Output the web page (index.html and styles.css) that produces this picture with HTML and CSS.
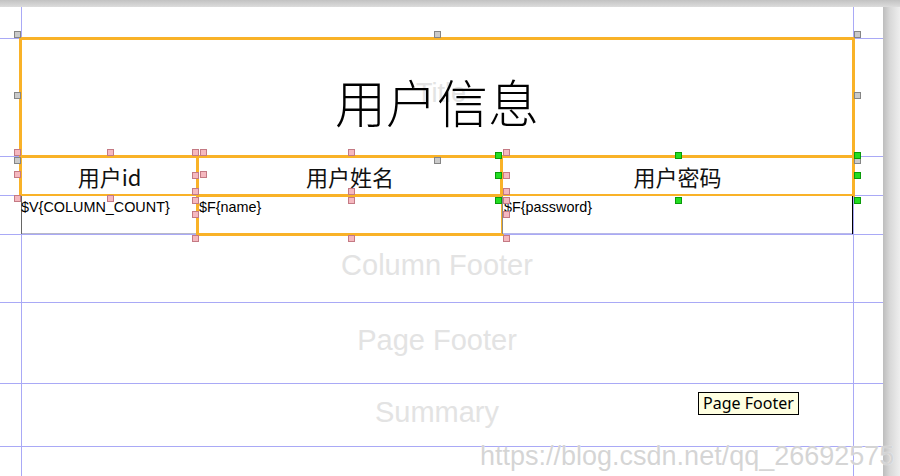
FILE: index.html
```html
<!DOCTYPE html>
<html lang="zh">
<head>
  <meta charset="UTF-8" />
  <meta name="viewport" content="width=device-width, initial-scale=1.0"/>
  <title>用户信息 - 报表设计</title>
  <link rel="stylesheet" href="styles.css">
</head>
<body>

  <div class="workspace">
    <div class="topbar"></div>

    <div class="stage">
      <div class="canvas">
        <div class="band band-margin"></div>

        <div class="band band-title">
          <div class="title-field selected">
            <span class="band-label">Title</span>
            <span class="title-text">用户信息</span>
          </div>
        </div>

        <div class="band band-header">
          <div class="row">
            <div class="cell col-id head selected">用户id</div>
            <div class="cell col-name head selected">用户姓名</div>
            <div class="cell col-pass head selected">用户密码</div>
          </div>
        </div>

        <div class="band band-detail">
          <div class="row">
            <div class="cell col-id detail">$V{COLUMN_COUNT}</div>
            <div class="cell col-name detail selected">$F{name}</div>
            <div class="cell col-pass detail">$F{password}</div>
          </div>
        </div>

        <div class="band band-footer">
          <span class="band-label">Column Footer</span>
        </div>
        <div class="band band-page">
          <span class="band-label">Page Footer</span>
        </div>
        <div class="band band-summary">
          <span class="band-label">Summary</span>
        </div>

        <!-- hover tip -->
        <div class="tooltip">Page Footer</div>
        <div class="watermark">https://blog.csdn.net/qq_26692575</div>
      </div>
      <div class="shadow"></div>
    </div>

    <!-- selection handles -->
    <svg class="handles" width="900" height="476" viewBox="0 0 900 476">
      <g class="h-gray">
        <rect x="14.5" y="31.5" width="6" height="6"/>
        <rect x="434.5" y="31.5" width="6" height="6"/>
        <rect x="854.5" y="31.5" width="6" height="6"/>
        <rect x="14.5" y="92.5" width="6" height="6"/>
        <rect x="854.5" y="92.5" width="6" height="6"/>
        <rect x="14.5" y="157.5" width="6" height="6"/>
        <rect x="434.5" y="157.5" width="6" height="6"/>
        <rect x="854.5" y="157.5" width="6" height="6"/>
      </g>
      <g class="h-pink">
        <rect x="14.5" y="149.5" width="6" height="6"/>
        <rect x="107.5" y="149.5" width="6" height="6"/>
        <rect x="192.5" y="149.5" width="6" height="6"/>
        <rect x="200.5" y="149.5" width="6" height="6"/>
        <rect x="348.5" y="149.5" width="6" height="6"/>
        <rect x="503.5" y="149.5" width="6" height="6"/>
        <rect x="14.5" y="171.5" width="6" height="6"/>
        <rect x="192.5" y="172.5" width="6" height="6"/>
        <rect x="200.5" y="171.5" width="6" height="6"/>
        <rect x="503.5" y="172.5" width="6" height="6"/>
        <rect x="192.5" y="188.5" width="6" height="6"/>
        <rect x="348.5" y="188.5" width="6" height="6"/>
        <rect x="503.5" y="188.5" width="6" height="6"/>
        <rect x="14.5" y="195.5" width="6" height="6"/>
        <rect x="107.5" y="195.5" width="6" height="6"/>
        <rect x="192.5" y="197.5" width="6" height="6"/>
        <rect x="348.5" y="197.5" width="6" height="6"/>
        <rect x="503.5" y="197.5" width="6" height="6"/>
        <rect x="192.5" y="211.5" width="6" height="6"/>
        <rect x="503.5" y="211.5" width="6" height="6"/>
        <rect x="192.5" y="235.5" width="6" height="6"/>
        <rect x="348.5" y="235.5" width="6" height="6"/>
        <rect x="503.5" y="235.5" width="6" height="6"/>
      </g>
      <g class="h-green">
        <rect x="495.5" y="152.5" width="6" height="6"/>
        <rect x="675.5" y="152.5" width="6" height="6"/>
        <rect x="854.5" y="152.5" width="6" height="6"/>
        <rect x="495.5" y="172.5" width="6" height="6"/>
        <rect x="854.5" y="172.5" width="6" height="6"/>
        <rect x="495.5" y="197.5" width="6" height="6"/>
        <rect x="675.5" y="197.5" width="6" height="6"/>
        <rect x="854.5" y="197.5" width="6" height="6"/>
      </g>
    </svg>
  </div>

</body>
</html>
```

FILE: styles.css
```css
body {
  margin: 0;
  font-family: "Liberation Sans", Arial, sans-serif;
  background: #ececec;
}

.workspace {
  position: relative;
  width: 900px;
  height: 476px;
  display: flex;
  flex-direction: column;
  overflow: hidden;
}

.topbar {
  height: 7px;
  background: linear-gradient(#c2c2c2, #dcdcdc);
}

.stage {
  flex: 1;
  display: flex;
}

/* page with the two vertical margin guides */
.canvas {
  position: relative;
  width: 883px;
  background:
    linear-gradient(#a9a9f6, #a9a9f6) 21px 0 / 1px 100% no-repeat,
    linear-gradient(#a9a9f6, #a9a9f6) 853px 0 / 1px 100% no-repeat,
    #fff;
}

.shadow {
  flex: 1;
  background: linear-gradient(to right, #bdbdbd, #d8d8d8 40%, #eeeeee);
}

.band {
  display: flex;
  padding-left: 21px;
  border-bottom: 1px solid #a9a9f6;
}

.band-margin { height: 31px; }
.band-title { height: 117px; }
.band-header { height: 38px; }
.band-detail { height: 38px; }
.band-footer { height: 67px; }
.band-page { height: 80px; }
.band-summary { height: 62px; }

.band-label {
  width: 832px;
  display: flex;
  align-items: center;
  justify-content: center;
  padding-bottom: 6px;
  font-size: 29px;
  color: #e3e3e3;
}

.selected {
  outline: 3px solid #f9b228;
  outline-offset: -1px;
}

.title-field {
  width: 832px;
  display: grid;
  place-items: center;
}

.title-field > span {
  grid-area: 1 / 1;
}

.title-field .band-label {
  padding: 0 0 8px 4px;
  font-size: 27px;
}

.title-text {
  margin-top: 6px;
  margin-right: 4px;
  font-family: "Noto Sans CJK SC", sans-serif;
  font-weight: 300;
  font-size: 51px;
  color: #000;
}

.row {
  display: flex;
  width: 832px;
}

.cell {
  box-sizing: border-box;
  background: #fff;
}

.col-id { width: 177px; }
.col-name { width: 304px; }
.col-pass { width: 351px; }

.head {
  display: flex;
  align-items: center;
  justify-content: center;
  padding-bottom: 1px;
  font-family: "Noto Sans CJK SC", sans-serif;
  font-size: 22px;
  color: #111;
}

.head.col-pass {
  box-shadow: inset -1px -1px 0 #7a7a7a;
}

.detail {
  padding: 3px 0 0 0;
  font-size: 14.4px;
  color: #000;
}

.detail.col-id {
  box-shadow: inset 1px 0 0 #666, inset 0 -1px 0 #b8b8c8;
}

.detail.col-name {
  padding-left: 1px;
}

.detail.col-pass {
  padding-left: 2px;
  box-shadow: inset 1px 0 0 #8a8a8a, inset -1px 0 0 #000, inset 0 -1px 0 #b8b8e8;
}

.tooltip {
  position: absolute;
  left: 698px;
  top: 385px;
  box-sizing: border-box;
  width: 101px;
  height: 23px;
  border: 1px solid #000;
  background: #ffffe1;
  font-family: "Noto Sans", sans-serif;
  font-size: 16px;
  line-height: 20px;
  text-align: center;
  color: #000;
}

.watermark {
  position: absolute;
  left: 480px;
  top: 434px;
  font-size: 27px;
  line-height: 30px;
  white-space: nowrap;
  color: rgba(200, 200, 200, 0.75);
  text-shadow: 0 0 1px #fff;
}

.handles {
  position: absolute;
  left: 0;
  top: 0;
  pointer-events: none;
}

.h-gray rect { fill: #cacaca; stroke: #858585; }
.h-pink rect { fill: #f5b8bf; stroke: #c47a84; }
.h-green rect { fill: #22dd22; stroke: #0a9a0a; }
```
